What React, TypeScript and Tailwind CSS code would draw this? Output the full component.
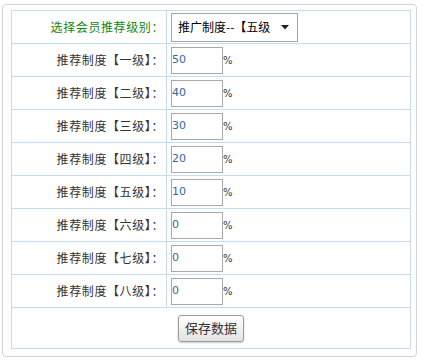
const levels = [
  { name: '一级', value: '50' },
  { name: '二级', value: '40' },
  { name: '三级', value: '30' },
  { name: '四级', value: '20' },
  { name: '五级', value: '10' },
  { name: '六级', value: '0' },
  { name: '七级', value: '0' },
  { name: '八级', value: '0' },
];

const cjk = { fontFamily: '"Noto Sans CJK SC", "Noto Sans", sans-serif' };
const num = { fontFamily: '"DejaVu Sans", sans-serif' };

function Row({ label, green, children }: { label: string; green?: boolean; children: React.ReactNode }) {
  return (
    <div className="flex h-[33px] border-b border-[#c5dcef]">
      <div
        className={`flex w-[155px] items-center justify-end border-r border-[#c5dcef] pr-[2px] text-[12px] tracking-[0.6px] ${
          green ? 'text-[#118811]' : 'text-[#333333]'
        }`}
      >
        {label}
      </div>
      <div className="flex flex-1 items-center pl-[4px]">{children}</div>
    </div>
  );
}

export default function App() {
  return (
    <div className="h-[363px] w-[422px] bg-white pl-[2px] pt-[4px]" style={cjk}>
      <div className="h-[353px] w-[415px] rounded-[4px] border border-[#d4d4d4] pl-[8px] pt-[5px]">
        <div className="w-[400px] border-x border-t border-[#c5dcef]">
          <Row label="选择会员推荐级别：" green>
            <div className="flex h-[29px] w-[127px] items-center justify-between border border-[#a6a6a6] bg-white pl-[6px] pr-[8px] text-[12px] text-black">
              <span className="overflow-hidden whitespace-nowrap">推广制度--【五级</span>
              <svg width="8" height="5" viewBox="0 0 8 5" className="shrink-0">
                <path d="M0 0 H8 L4 4.5 Z" fill="#222" />
              </svg>
            </div>
          </Row>
          {levels.map((l) => (
            <Row key={l.name} label={`推荐制度【${l.name}】：`}>
              <div className="flex h-[27px] w-[52px] items-center border border-[#a9a9a9] bg-white">
                <span className="text-[11px] text-[#3567a0]" style={num}>
                  {l.value}
                </span>
              </div>
              <span className="text-[10px] text-[#333]" style={num}>
                %
              </span>
            </Row>
          ))}
          <div className="flex h-[41px] items-center justify-center border-b border-[#c5dcef]">
            <button className="h-[27px] w-[66px] rounded-[3px] border border-[#9a9a9a] bg-gradient-to-b from-white to-[#e2e2e2] text-[13px] text-[#333] shadow-[0_1px_2px_rgba(0,0,0,0.2)]">
              保存数据
            </button>
          </div>
        </div>
      </div>
    </div>
  );
}
